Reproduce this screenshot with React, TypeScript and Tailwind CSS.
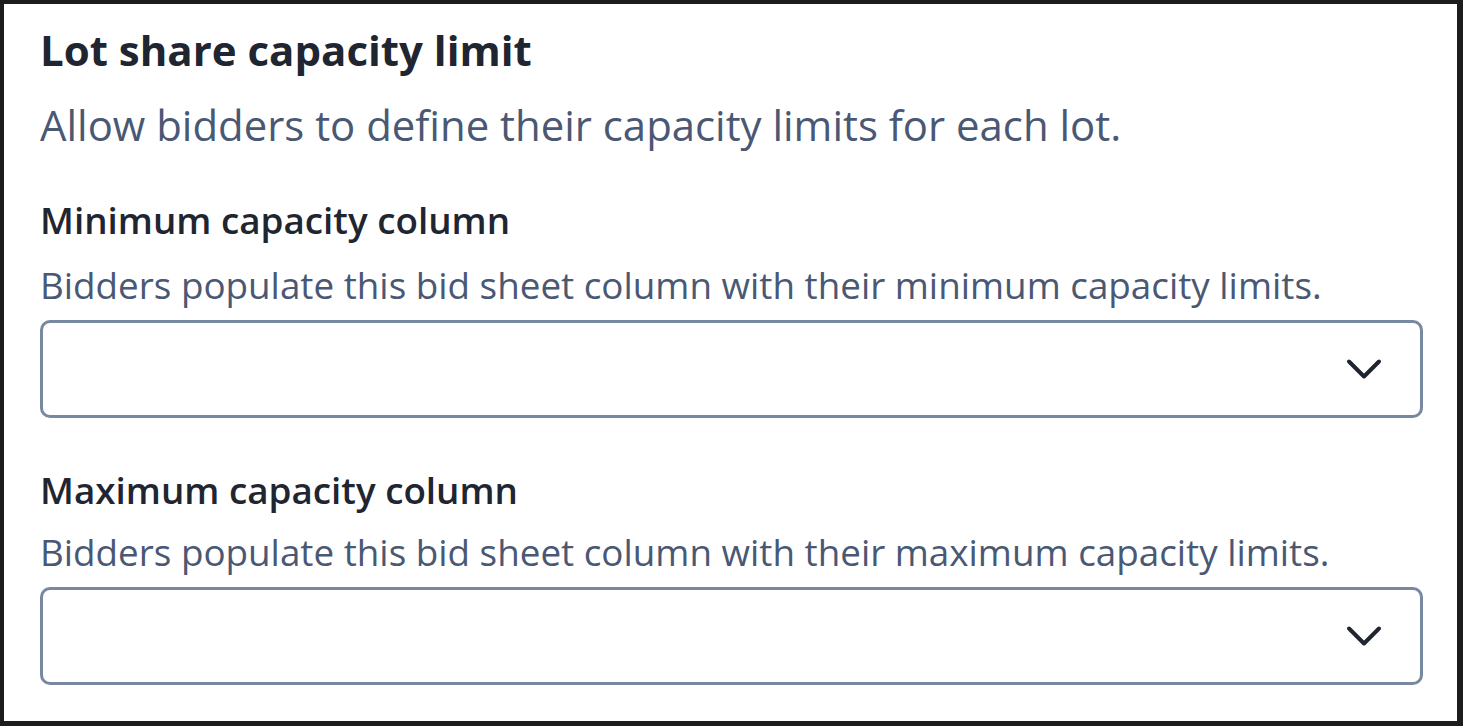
import { ChevronDown } from 'lucide-react';

function CapacitySelect({ label, help, gap }: { label: string; help: string; gap: string }) {
  return (
    <div className="flex flex-col">
      <div className="text-[36.8px] leading-[48px] font-semibold text-[#1f2531]">{label}</div>
      <div className={`${gap} text-[36.8px] leading-[48px] text-[#4a5874]`}>{help}</div>
      <div className="mt-[11px] flex h-[98px] items-center justify-end rounded-[10px] border-[3px] border-[#7788a0] pr-[26px]">
        <ChevronDown className="h-[60px] w-[60px] text-[#1f2531]" strokeWidth={1.6} />
      </div>
    </div>
  );
}

export default function App() {
  return (
    <div className="h-[726px] w-[1463px] border-[4px] border-r-[6px] border-b-[5px] border-[#1c1c1c] bg-white font-['Open_Sans',sans-serif]">
      <div className="flex flex-col pl-[36px] pr-[34px] pt-[20px]">
        <div className="text-[42px] leading-[52px] font-bold text-[#1f2531]">Lot share capacity limit</div>
        <div className="mt-[23px] text-[41.9px] leading-[52px] text-[#4a5874]">
          Allow bidders to define their capacity limits for each lot.
        </div>
        <div className="mt-[45px]">
          <CapacitySelect
            label="Minimum capacity column"
            help="Bidders populate this bid sheet column with their minimum capacity limits."
            gap="mt-[17px]"
          />
        </div>
        <div className="mt-[48px]">
          <CapacitySelect
            label="Maximum capacity column"
            help="Bidders populate this bid sheet column with their maximum capacity limits."
            gap="mt-[14px]"
          />
        </div>
      </div>
    </div>
  );
}
